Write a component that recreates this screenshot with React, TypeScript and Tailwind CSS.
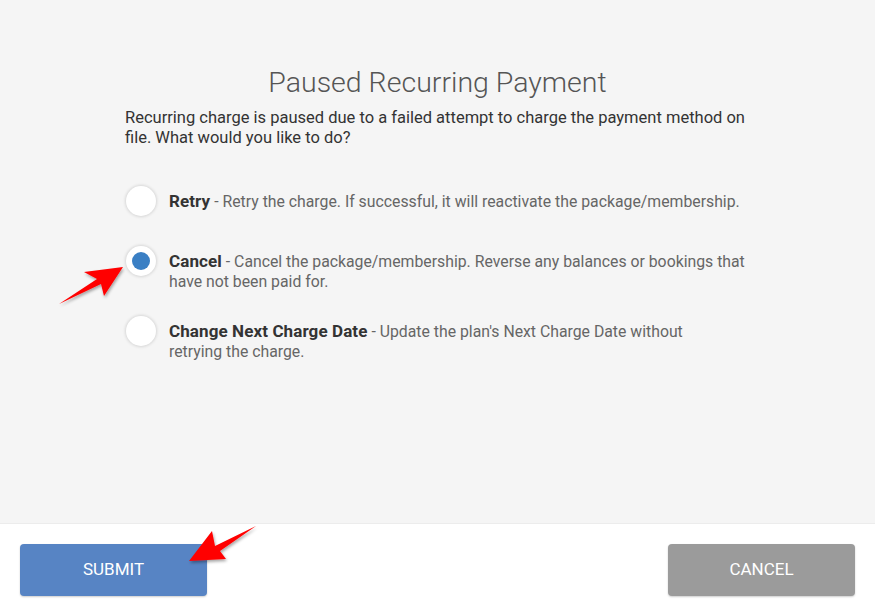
import { useState } from 'react';

const options = [
  {
    id: 'retry',
    label: 'Retry',
    text: 'Retry the charge. If successful, it will reactivate the package/membership.',
  },
  {
    id: 'cancel',
    label: 'Cancel',
    text: 'Cancel the package/membership. Reverse any balances or bookings that have not been paid for.',
  },
  {
    id: 'change',
    label: 'Change Next Charge Date',
    text: "Update the plan's Next Charge Date without\nretrying the charge.",
  },
];

function Radio({ checked }: { checked: boolean }) {
  return (
    <span className="flex h-[30px] w-[30px] shrink-0 items-center justify-center rounded-full bg-white shadow-[0_0_3px_1px_rgba(0,0,0,0.12)]">
      {checked && <span className="h-[18px] w-[18px] rounded-full bg-[#3a7fc4]" />}
    </span>
  );
}

export default function App() {
  const [choice, setChoice] = useState('cancel');

  return (
    <div
      className="relative flex h-[613px] w-[875px] flex-col bg-white"
      style={{ fontFamily: 'Roboto, "Open Sans", sans-serif' }}
    >
      <div className="h-[524px] border-b border-[#ececec] bg-[#f5f5f5]">
        <div className="mx-auto w-[625px] pt-[66px]">
          <h1 className="text-center text-[28.5px] font-light leading-[34px] text-[#555]">
            Paused Recurring Payment
          </h1>
          <p className="mt-[8px] text-[16.5px] leading-[20px] text-[#333]">
            Recurring charge is paused due to a failed attempt to charge the payment method on
            file. What would you like to do?
          </p>

          <div className="mt-[38px] flex flex-col">
            {options.map((o, i) => (
              <label
                key={o.id}
                onClick={() => setChoice(o.id)}
                className={
                  'flex cursor-pointer items-start gap-[13px] pl-px ' +
                  (i === 1 ? 'mt-[30px]' : i === 2 ? 'mt-[24px]' : '')
                }
              >
                <Radio checked={choice === o.id} />
                <p className="mt-[5px] w-[582px] whitespace-pre-line text-[15.8px] leading-[20px] text-[#666]">
                  <b className="text-[17px] font-bold tracking-[0.1px] text-[#333]">{o.label}</b> - {o.text}
                </p>
              </label>
            ))}
          </div>
        </div>
      </div>

      <div className="flex flex-1 items-start justify-between px-[20px] pt-[20px]">
        <button className="h-[52px] w-[187px] rounded-[4px] bg-[#5784c4] text-[17px] text-white shadow-[0_1px_2px_rgba(0,0,0,0.2)]">
          SUBMIT
        </button>
        <button className="h-[52px] w-[187px] rounded-[4px] bg-[#9b9b9b] text-[17px] text-white shadow-[0_1px_2px_rgba(0,0,0,0.2)]">
          CANCEL
        </button>
      </div>

      {/* annotation arrows */}
      <svg className="pointer-events-none absolute left-0 top-0" width="875" height="613">
        <defs>
          <filter id="sh" x="-20%" y="-20%" width="140%" height="140%">
            <feDropShadow dx="1" dy="2" stdDeviation="1.5" floodColor="#000" floodOpacity="0.35" />
          </filter>
        </defs>
        <polygon
          points="123,267 84,272 97,279 59,304 101,284 104,296"
          fill="#ff0000"
          filter="url(#sh)"
        />
        <polygon
          points="189,561 212,531 215,546 256,526 220,551 226,559"
          fill="#ff0000"
          filter="url(#sh)"
        />
      </svg>
    </div>
  );
}
